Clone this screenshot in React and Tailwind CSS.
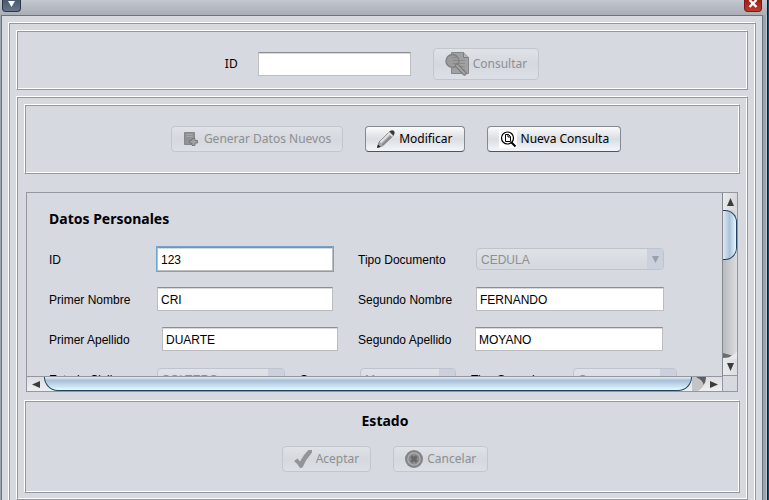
import React from "react";

const TAHOMA = "font-['Noto_Sans','DejaVu_Sans',sans-serif]";

// two pixel etched frame, light outside and dark inside on the top left
const Etched = ({ className = "", children }) => (
    <section
        className={`border border-t-white border-l-white border-r-[#94979f] border-b-[#94979f] shadow-[inset_1px_1px_0_#94979f,inset_-1px_-1px_0_#ffffff] ${className}`}
    >
        {children}
    </section>
);

const Button = ({ icon, disabled, tall, children }) => (
    <button
        type="button"
        disabled={disabled}
        className={`flex items-center gap-1 rounded-[4px] border px-[11px] text-[12px] ${TAHOMA} ${tall ? "h-8" : "h-[26px]"} ${
            disabled
                ? "border-[#c3c6cc] bg-linear-to-b from-[#dfe2e7] via-[#d5d9df] to-[#dcdfe6] text-[#8e8f91]"
                : "border-[#85888f] border-b-[#4f545c] bg-linear-to-b from-[#fbfbfc] via-[#dadde2] to-[#f3f6fb] text-black"
        }`}
    >
        {icon}
        {children}
    </button>
);

const TextBox = ({ className = "", ...props }) => (
    <input
        type="text"
        className={`h-6 border border-[#bcbdc0] border-t-[#8d8e91] bg-white px-[3px] pt-[2px] text-[12px] text-black shadow-[inset_0_1px_0_#d9d9da] outline-none ${className}`}
        {...props}
    />
);

const Field = ({ id, label, labelWidth, width, value, focused }) => (
    <div className="flex h-6 items-center">
        <label htmlFor={id} className={`pt-[2px] ${labelWidth}`}>{label}</label>
        <TextBox
            id={id}
            defaultValue={value}
            className={`${width} ${focused ? "ring-1 ring-[#73a4d1] outline-1! outline-offset-1 outline-[#a9c4de]!" : ""}`}
        />
    </div>
);

const SelectField = ({ id, label, labelWidth, width, value }) => (
    <div className="flex h-6 items-center">
        <label htmlFor={id} className={`pt-[2px] ${labelWidth}`}>{label}</label>
        <div className={`relative h-[22px] ${width}`}>
            <select
                id={id}
                disabled
                defaultValue={value}
                className="h-full w-full appearance-none rounded-[4px] border border-[#bfc4cc] bg-linear-to-b from-[#dfe2e6] to-[#d4d8df] px-1 pt-[2px] text-[12px] text-[#8e8f91] opacity-100"
            >
                <option>{value}</option>
            </select>
            <span className="pointer-events-none absolute inset-y-px right-px flex w-4 items-center justify-center rounded-r-[3px] bg-[#cad1dc]">
                <svg width="7" height="7" viewBox="0 0 7 7">
                    <path d="M0 0H7L3.500 7Z" fill="#9ba0a8" />
                </svg>
            </span>
        </div>
    </div>
);

const DocSearchIcon = () => (
    <svg width="24" height="24" viewBox="0 0 24 24" fill="none">
        <path d="M6.500 .5H18.500L23.500 5.500V21.500H6.500Z" fill="#a0a1a3" stroke="#858688" />
        <path d="M18.500 .5V5.500H23.500" fill="#b5b6b8" stroke="#7c7d7f" />
        <path d="M13 8.500H20M14 11.500H20M15 14.500H20M17 17.500H20" stroke="#8a8b8d" />
        <circle cx="7.500" cy="9" r="6.500" fill="#9b9c9e" stroke="#808183" strokeWidth="1.400" />
        <path d="M7.500 5.500H13M7.500 8.500H13M7.500 11.500H12" stroke="#88898b" />
        <path d="M12 13.500L19.500 21.500" stroke="#77787a" strokeWidth="4.200" strokeLinecap="round" />
        <path d="M12 13.500L19.500 21.500" stroke="#a2a3a5" strokeWidth="2" strokeLinecap="round" />
    </svg>
);

const NewDocIcon = () => (
    <svg width="14" height="14" viewBox="0 0 14 14" fill="none">
        <path d="M.5 .5H10.500V12.500H.5Z" fill="#919294" stroke="#858688" />
        <path d="M2.500 2.500H8.500M2.500 4.500H8.500" stroke="#a5a6a8" />
        <path d="M8 6.500H11V8.500H13.500V11H11V13.500H8V11H5.500V8.500H8Z" fill="#a2a3a5" stroke="#77787a" />
    </svg>
);

const PencilIcon = () => (
    <svg width="18" height="18" viewBox="0 0 18 18" fill="none">
        <path d="M.5 17L2 12L12.500 1.500L16.500 5.500L5.500 16Z" fill="#a8a8a8" stroke="#808080" strokeWidth=".8" />
        <path d="M3.500 12.500L12.500 3.500" stroke="#e2e2e2" strokeWidth="2" />
        <path d="M5.500 15L15 5.500" stroke="#858585" strokeWidth="1.500" />
        <path d="M11.500 2.500L15.500 6.500" stroke="#e8e8e8" strokeWidth="1.500" />
        <path d="M12.500 1.500Q15 -.8 17 1Q18.500 3 16.500 5.500Z" fill="#383838" />
        <path d="M0 18L1 14.500L3.700 17Z" fill="#1a1a1a" />
    </svg>
);

const QueryIcon = () => (
    <svg width="18" height="18" viewBox="0 0 18 18" fill="none">
        <path d="M0 0H18V18H0Z" fill="#fff" />
        <circle cx="8.500" cy="8" r="6" stroke="#000" strokeWidth="1.200" />
        <path d="M6.500 4.500H9.500L11.500 6.500V11.500H6.500Z" stroke="#000" />
        <path d="M9 4.500V7H11.500" stroke="#000" />
        <path d="M12.500 12.500L16.500 16.500" stroke="#000" strokeWidth="2" />
    </svg>
);

const CheckIcon = () => (
    <svg width="18" height="18" viewBox="0 0 18 18">
        <path d="M0 11L3.500 8.500L6 11.500Q9.500 4.500 14.500 0H18V2.500Q12 9 8.500 17.500L6 18Q3 13 0 11Z" fill="#939496" />
    </svg>
);

const CancelIcon = () => (
    <svg width="18" height="18" viewBox="0 0 18 18" fill="none">
        <circle cx="9" cy="9" r="9" fill="#838486" />
        <circle cx="9" cy="9" r="6.200" fill="#8b8c8e" stroke="#b0b1b3" strokeWidth="1.200" />
        <path d="M6.300 6.300L11.700 11.700M11.700 6.300L6.300 11.700" stroke="#66676a" strokeWidth="3" />
    </svg>
);

const VerticalBar = () => (
    <div className="flex w-[15px] flex-col border-l border-[#84888f] bg-linear-to-r from-[#b9babd] to-[#dcdde1]">
        <button type="button" aria-label="Subir" className="flex h-[17px] shrink-0 items-center justify-center bg-linear-to-r from-[#e9eaec] to-[#d6d7da]">
            <svg width="7" height="8" viewBox="0 0 7 8"><path d="M0 8H7L3.500 0Z" fill="#3c3c3c" /></svg>
        </button>
        <div className="h-[50px] shrink-0 rounded-r-[12px] border border-l-0 border-[#23415c] bg-linear-to-r from-[#e0e9f1] via-[#a9c3dc] to-[#e4f8ff]" />
        <div className="flex-1" />
        <svg width="14" height="8" viewBox="0 0 14 8">
            <path d="M0 8V6Q9 7 14 0V8Z" fill="#e8e9ec" />
            <path d="M0 2V7Q6 7 9 4.500Z" fill="#6a6c70" />
        </svg>
        <button type="button" aria-label="Bajar" className="flex h-[17px] shrink-0 items-center justify-center border-b border-[#94979f] bg-linear-to-r from-[#e9eaec] to-[#dcdde0]">
            <svg width="7" height="8" viewBox="0 0 7 8"><path d="M0 0H7L3.500 8Z" fill="#3c3c3c" /></svg>
        </button>
    </div>
);

const HorizontalBar = () => (
    <div className="flex h-[15px] min-w-0 flex-1 border-t border-[#94979f] bg-linear-to-b from-[#dddee1] to-[#eeeff1]">
        <button type="button" aria-label="Izquierda" className="flex w-[17px] shrink-0 items-center justify-center">
            <svg width="8" height="7" viewBox="0 0 8 7"><path d="M8 0V7L0 3.500Z" fill="#3c3c3c" /></svg>
        </button>
        <div className="min-w-0 flex-1 rounded-b-[14px] border border-t-0 border-[#23415c] bg-[linear-gradient(#e8eef4_0%,#a9bfd3_25%,#b3cde5_45%,#e4fbff_100%)]" />
        <svg width="14" height="14" viewBox="0 0 14 14">
            <path d="M0 0H14Q13 10 6 14H-6Q0 9 0 0Z" fill="#c2c4c8" />
            <path d="M4 0H14Q14 5 11.500 8Q11 3 4 0Z" fill="#5c5e62" />
        </svg>
        <button type="button" aria-label="Derecha" className="flex w-[17px] shrink-0 items-center justify-center border-r border-[#94979f]">
            <svg width="8" height="7" viewBox="0 0 8 7"><path d="M0 0V7L8 3.500Z" fill="#3c3c3c" /></svg>
        </button>
    </div>
);

const PersonalData = () => (
    <form className="h-[183px] min-w-0 flex-1 overflow-hidden pt-[17px] pl-[22px] text-[12px]">
        <h2 className={`mb-[19px] h-[18px] text-[14px] leading-[18px] font-bold ${TAHOMA}`}>Datos Personales</h2>
        <div className="flex w-[660px] flex-col gap-4">
            <div className="grid grid-cols-[309px_1fr]">
                <Field id="persona-id" label="ID" labelWidth="w-[108px]" width="w-[176px]" value="123" focused />
                <SelectField id="tipo-documento" label="Tipo Documento" labelWidth="w-[118px]" width="w-[188px]" value="CEDULA" />
            </div>
            <div className="grid grid-cols-[309px_1fr]">
                <Field id="primer-nombre" label="Primer Nombre" labelWidth="w-[108px]" width="w-[176px]" value="CRI" />
                <Field id="segundo-nombre" label="Segundo Nombre" labelWidth="w-[118px]" width="w-[188px]" value="FERNANDO" />
            </div>
            <div className="grid grid-cols-[309px_1fr]">
                <Field id="primer-apellido" label="Primer Apellido" labelWidth="w-[113px]" width="w-[176px]" value="DUARTE" />
                <Field id="segundo-apellido" label="Segundo Apellido" labelWidth="w-[117px]" width="w-[188px]" value="MOYANO" />
            </div>
            <div className="flex gap-[15px]">
                <SelectField id="estado-civil" label="Estado Civil" labelWidth="w-[108px]" width="w-[128px]" value="SOLTERO" />
                <SelectField id="sexo" label="Sexo" labelWidth="w-[60px]" width="w-24" value="M" />
                <SelectField id="tipo-sanguineo" label="Tipo Sanguineo" labelWidth="w-[102px]" width="w-[104px]" value="O" />
            </div>
        </div>
    </form>
);

const App = () => {
    return (
        <div className="h-screen overflow-hidden bg-[#1d4a66] pr-px font-['Liberation_Sans',Arial,sans-serif] text-black">
            <div className="flex h-full flex-col border-r border-[#0d1a28] bg-[#9ba3ae] shadow-[inset_-1px_0_0_#c3c8d0]">
                <header className="flex h-[15px] shrink-0 items-start justify-between bg-linear-to-b from-[#c3c7cf] to-[#a9aeb7] pr-[5px] pl-[2px]">
                    <button type="button" aria-label="Menú" className="flex h-3 w-[19px] items-start justify-center rounded-b-[4px] border border-t-0 border-[#2c3648] bg-linear-to-b from-[#4c586c] to-[#66758a] pt-px">
                        <svg width="7" height="6" viewBox="0 0 7 6"><path d="M0 0H7L3.500 6Z" fill="#fff" /></svg>
                    </button>
                    <button type="button" aria-label="Cerrar" className="flex h-3 w-[18px] items-start justify-center rounded-b-[4px] border border-t-0 border-[#7c1a16] bg-linear-to-b from-[#9e1c14] to-[#c03a2c]">
                        <svg width="10" height="8" viewBox="0 0 10 8"><path d="M1.500 0L8.500 7M8.500 0L1.500 7" stroke="#fff" strokeWidth="2.400" /></svg>
                    </button>
                </header>

                <main className="mr-1 ml-px min-h-0 flex-1 overflow-hidden border border-b-0 border-[#6a737f] bg-[#d6d9e0] p-[6px]">
                    <Etched className="p-[7px]">
                        <Etched className="flex h-[60px] items-start justify-center pt-[17px]">
                            <div className="flex items-center gap-[22px]">
                                <div className="flex items-center gap-5">
                                    <label htmlFor="buscar-id" className={`text-[12px] ${TAHOMA}`}>ID</label>
                                    <TextBox id="buscar-id" className="w-[153px]" />
                                </div>
                                <Button disabled tall icon={<DocSearchIcon />}>Consultar</Button>
                            </div>
                        </Etched>

                        <Etched className="mt-[6px] px-[7px] pt-[7px] pb-[6px]">
                            <Etched className="flex h-[70px] items-start justify-center gap-[22px] pt-[21px] pl-7">
                                <Button disabled icon={<span className="pr-[2px] pl-px"><NewDocIcon /></span>}>Generar Datos Nuevos</Button>
                                <Button icon={<PencilIcon />}>Modificar</Button>
                                <Button icon={<QueryIcon />}>Nueva Consulta</Button>
                            </Etched>

                            <div className="mx-[2px] mt-[18px] border border-[#94979f]">
                                <div className="flex">
                                    <PersonalData />
                                    <VerticalBar />
                                </div>
                                <div className="flex pr-[14px]">
                                    <HorizontalBar />
                                </div>
                            </div>

                            <Etched className="mt-2 flex h-[93px] flex-col items-center pt-[11px] pl-[6px]">
                                <h2 className={`mb-4 h-[18px] text-[14px] leading-[18px] font-bold ${TAHOMA}`}>Estado</h2>
                                <div className="flex gap-[22px]">
                                    <Button disabled icon={<CheckIcon />}>Aceptar</Button>
                                    <Button disabled icon={<CancelIcon />}>Cancelar</Button>
                                </div>
                            </Etched>
                        </Etched>
                    </Etched>
                </main>
            </div>
        </div>
    );
};

export default App;
